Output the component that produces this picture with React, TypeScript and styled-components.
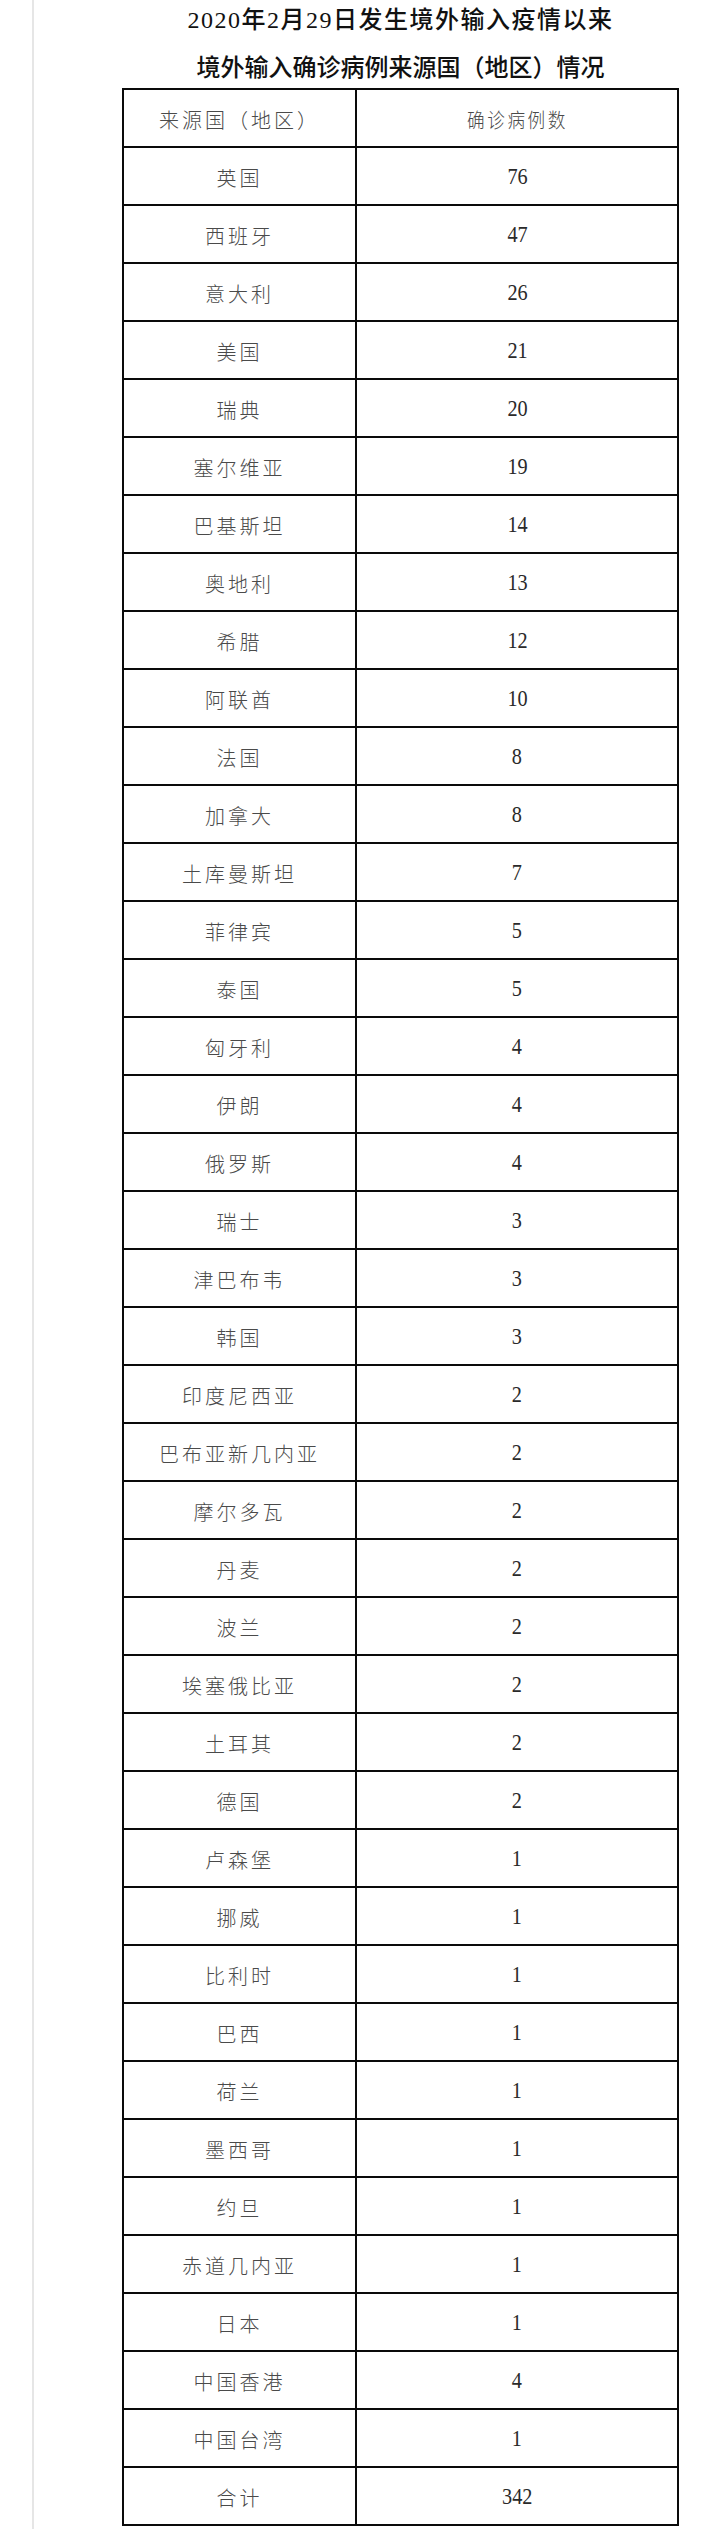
import React from 'react'
import styled, { createGlobalStyle } from 'styled-components'

const GlobalStyle = createGlobalStyle`
    html, body {
        margin: 0;
        padding: 0;
        background: #ffffff;
    }
`

const Page = styled.div`
    width: 726px;
    min-height: 2529px;
    padding-left: 32px;
    box-sizing: border-box;
    background: #ffffff;
`

const Sheet = styled.div`
    min-height: 2529px;
    border-left: 2px solid #e6e6e6;
    padding-left: 88px;
    box-sizing: border-box;
`

const Content = styled.div`
    width: 557px;
`

const Heading = styled.h1<{ spacing: number; gap: number }>`
    margin: ${({ gap }) => gap}px 0 0;
    font-family: "Liberation Serif", "Noto Sans CJK SC", serif;
    font-size: 24px;
    font-weight: 500;
    line-height: 40px;
    letter-spacing: ${({ spacing }) => spacing}px;
    color: #111111;
    text-align: center;
    white-space: nowrap;
`

const Table = styled.div`
    border: 2px solid #0a0a0a;
    border-bottom: none;
    display: grid;
    grid-template-columns: 233px 1fr;
`

const Cell = styled.div<{ left?: boolean }>`
    height: 58px;
    box-sizing: border-box;
    border-bottom: 2px solid #0a0a0a;
    border-right: ${({ left }) => (left ? '2px solid #0a0a0a' : 'none')};
    display: flex;
    align-items: center;
    justify-content: center;
    padding-top: 2px;
`

const Name = styled.span`
    font-family: "Noto Sans CJK SC", sans-serif;
    font-size: 20px;
    font-weight: 300;
    letter-spacing: 3px;
    color: #4a4a4a;
`

const Count = styled.span<{ cjk?: boolean }>`
    font-family: ${({ cjk }) => (cjk ? '"Noto Sans CJK SC", sans-serif' : '"Liberation Serif", serif')};
    font-size: ${({ cjk }) => (cjk ? '20px' : '23px')};
    font-weight: ${({ cjk }) => (cjk ? 300 : 400)};
    letter-spacing: ${({ cjk }) => (cjk ? '3px' : '0')};
    color: ${({ cjk }) => (cjk ? '#4a4a4a' : '#2a2a2a')};
    transform: scaleX(0.88);
`

const rows: [string, string][] = [
    ['英国', '76'],
    ['西班牙', '47'],
    ['意大利', '26'],
    ['美国', '21'],
    ['瑞典', '20'],
    ['塞尔维亚', '19'],
    ['巴基斯坦', '14'],
    ['奥地利', '13'],
    ['希腊', '12'],
    ['阿联酋', '10'],
    ['法国', '8'],
    ['加拿大', '8'],
    ['土库曼斯坦', '7'],
    ['菲律宾', '5'],
    ['泰国', '5'],
    ['匈牙利', '4'],
    ['伊朗', '4'],
    ['俄罗斯', '4'],
    ['瑞士', '3'],
    ['津巴布韦', '3'],
    ['韩国', '3'],
    ['印度尼西亚', '2'],
    ['巴布亚新几内亚', '2'],
    ['摩尔多瓦', '2'],
    ['丹麦', '2'],
    ['波兰', '2'],
    ['埃塞俄比亚', '2'],
    ['土耳其', '2'],
    ['德国', '2'],
    ['卢森堡', '1'],
    ['挪威', '1'],
    ['比利时', '1'],
    ['巴西', '1'],
    ['荷兰', '1'],
    ['墨西哥', '1'],
    ['约旦', '1'],
    ['赤道几内亚', '1'],
    ['日本', '1'],
    ['中国香港', '4'],
    ['中国台湾', '1'],
    ['合计', '342'],
]

const App = () => {
    return (
        <Page>
            <GlobalStyle />
            <Sheet>
                <Content>
                    <Heading spacing={1.5} gap={0}>2020年2月29日发生境外输入疫情以来</Heading>
                    <Heading spacing={0} gap={8}>境外输入确诊病例来源国（地区）情况</Heading>
                    <Table>
                        <Cell left><Name>来源国（地区）</Name></Cell>
                        <Cell><Count cjk>确诊病例数</Count></Cell>
                        {rows.map(([name, count]) => (
                            <React.Fragment key={name}>
                                <Cell left><Name>{name}</Name></Cell>
                                <Cell><Count>{count}</Count></Cell>
                            </React.Fragment>
                        ))}
                    </Table>
                </Content>
            </Sheet>
        </Page>
    )
}

export default App
